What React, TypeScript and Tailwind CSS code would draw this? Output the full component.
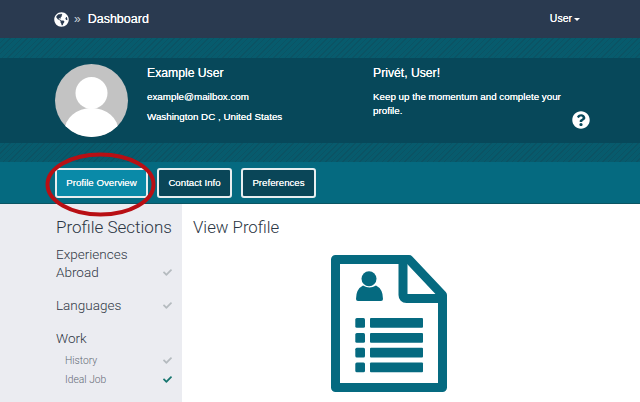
import { FaCheck, FaGlobeAmericas, FaQuestionCircle } from "react-icons/fa";

const sans = "font-['Liberation_Sans',Arial,sans-serif]";
const light = "font-['Roboto',sans-serif] font-light";
const halo = "[text-shadow:0_0_0.6px_#fff]";

function Stripes({ height }: { height: string }) {
  return (
    <div
      className={`${height} bg-[#07586a] bg-[repeating-linear-gradient(135deg,#075b6d_0px,#075b6d_3px,#0b5364_3px,#0b5364_4px)]`}
    />
  );
}

function Tab({ label, width, active }: { label: string; width: string; active?: boolean }) {
  return (
    <button
      className={`h-[30px] ${width} rounded-[3px] border-2 border-[#e8eef0] text-[9.7px] text-[#f2f6f7] ${halo} ${
        active ? "bg-[#0a8aa8]" : "bg-[#0a4658]"
      }`}
    >
      {label}
    </button>
  );
}

function SectionRow({ label, done, sub }: { label: string; done?: boolean; sub?: boolean }) {
  return (
    <div className={`flex items-center justify-between pr-[10px] ${sub ? "mt-[4px] h-[15px] pl-[9px]" : "h-[18px]"}`}>
      <span className={sub ? "text-[10.3px] leading-[15px] text-[#636a75]" : "text-[13.5px] leading-[18px] text-[#2f3744]"}>
        {label}
      </span>
      <FaCheck className={`text-[9px] ${done ? "text-[#17766f]" : "text-[#b5bbbf]"}`} />
    </div>
  );
}

function ResumeIcon() {
  return (
    <svg width="116" height="137" viewBox="0 0 116 137" className="shrink-0">
      <path
        d="M4.5 4.5H78L111.5 40V132.5H4.5Z"
        fill="#fff"
        stroke="#056a80"
        strokeWidth="9"
        strokeLinejoin="round"
      />
      <path d="M72 4.5V40Q72 43.5 75.5 43.5H111.5" fill="none" stroke="#056a80" strokeWidth="9" strokeLinejoin="round" />
      <circle cx="38" cy="23.7" r="7.5" fill="#056a80" />
      <path
        d="M25 44Q25 34 32 30.5Q38.5 34.5 45 30.5Q52 34 52 44Q52 46 50 46H27Q25 46 25 44Z"
        fill="#056a80"
      />
      {[63, 78, 92.7, 107.5].map((y) => (
        <g key={y} fill="#056a80">
          <rect x="24.3" y={y} width="9.7" height="9.7" rx="1.5" />
          <rect x="39" y={y} width="53" height="9.7" rx="1" />
        </g>
      ))}
    </svg>
  );
}

export default function App() {
  return (
    <div className={`relative h-[402px] w-[640px] overflow-hidden bg-white ${sans}`}>
      <header className="flex h-[38px] items-center justify-between bg-[#2a3a50] pl-[54px] pr-[60px] text-white">
        <div className="flex items-center">
          <FaGlobeAmericas className="text-[15px]" />
          <span className="ml-[5px] text-[12px] text-[#cfd5dc]">»</span>
          <span className={`ml-[7px] text-[12.5px] ${halo}`}>Dashboard</span>
        </div>
        <div className={`flex items-center gap-[2px] text-[10.5px] ${halo}`}>
          User
          <span className="mt-[1px] border-x-[3px] border-t-[3px] border-x-transparent border-t-white" />
        </div>
      </header>

      <Stripes height="h-[20px]" />

      <section className={`flex h-[85px] bg-[#07485a] pl-[55px] text-white ${halo}`}>
        <div className="mt-[6px] flex h-[73px] w-[73px] shrink-0 items-center justify-center overflow-hidden rounded-full bg-[#c3c3c3]">
          <svg width="73" height="73" viewBox="0 0 73 73">
            <circle cx="36.5" cy="29" r="16" fill="#fff" />
            <ellipse cx="36.5" cy="67" rx="27" ry="23" fill="#fff" />
          </svg>
        </div>
        <div className="ml-[19px] w-[226px] pt-[8px]">
          <h2 className="text-[12.2px] leading-[15px]">Example User</h2>
          <p className="mt-[10px] text-[9.8px] leading-[12px]">example@mailbox.com</p>
          <p className="mt-[8px] text-[9.8px] leading-[12px]">Washington DC , United States</p>
        </div>
        <div className="relative w-[204px] pt-[8px]">
          <h2 className="text-[12.2px] leading-[15px]">Privét, User!</h2>
          <p className="mt-[9px] text-[9.8px] leading-[14px]">
            Keep up the momentum and complete your profile.
          </p>
          <FaQuestionCircle className="absolute left-[199px] top-[53px] text-[18px]" />
        </div>
      </section>

      <Stripes height="h-[19px]" />

      <nav className="flex h-[42px] gap-[9px] border-b border-[#0a5563] bg-[#056a80] pl-[55px] pt-[6px]">
        <Tab label="Profile Overview" width="w-[93px]" active />
        <Tab label="Contact Info" width="w-[75px]" />
        <Tab label="Preferences" width="w-[75px]" />
      </nav>

      <main className="flex">
        <aside className={`h-[198px] w-[182px] shrink-0 bg-[#ebecf1] pl-[56px] pt-[13px] ${light}`}>
          <h3 className="text-[17px] leading-[20px] text-[#2a3543]">Profile Sections</h3>
          <div className="mt-[8px] text-[13.5px] leading-[18px] text-[#2f3744]">Experiences</div>
          <SectionRow label="Abroad" />
          <div className="mt-[15px]">
            <SectionRow label="Languages" />
          </div>
          <div className="mt-[15px]">
            <div className="mb-[6px] text-[13.5px] leading-[18px] text-[#2f3744]">Work</div>
            <SectionRow label="History" sub />
            <SectionRow label="Ideal Job" done sub />
          </div>
        </aside>
        <div className="flex-1 pl-[11px] pt-[13px]">
          <h3 className={`text-[16.8px] leading-[20px] text-[#2a3543] ${light}`}>View Profile</h3>
          <div className="ml-[138px] mt-[18px]">
            <ResumeIcon />
          </div>
        </div>
      </main>

      <svg width="640" height="402" className="pointer-events-none absolute left-0 top-0">
        <ellipse cx="100.5" cy="184.5" rx="53" ry="30" fill="none" stroke="#b80f14" strokeWidth="4" />
      </svg>
    </div>
  );
}
